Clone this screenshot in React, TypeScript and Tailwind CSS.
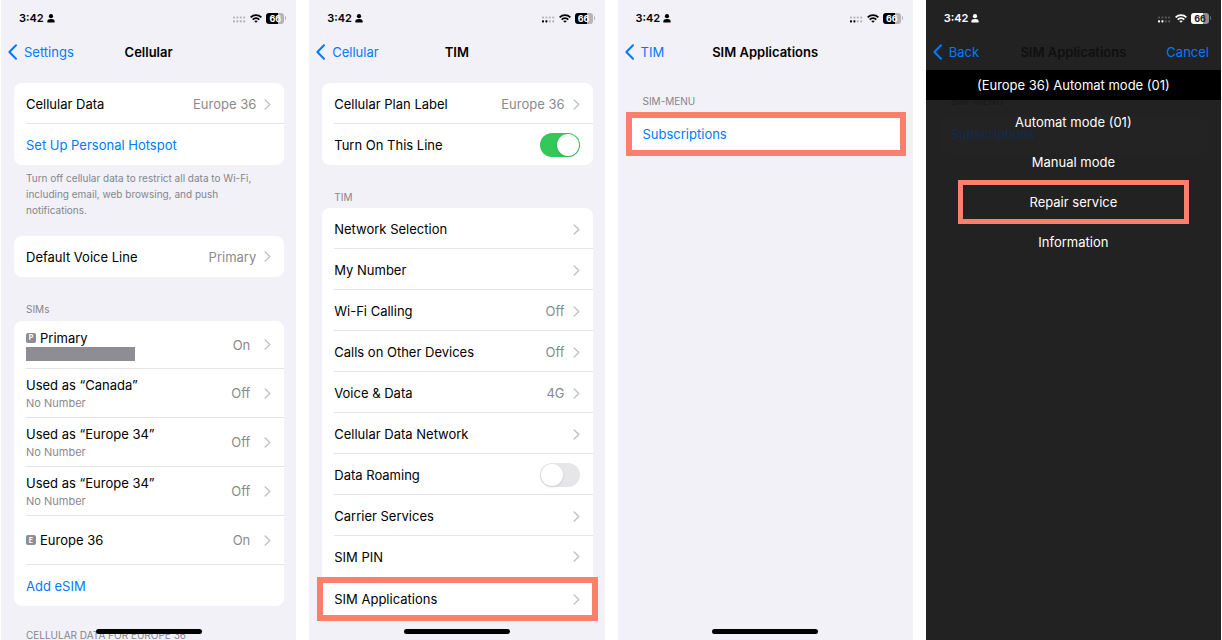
import type { ReactNode } from "react";
import clsx from "clsx";

type SimRow = {
  id: string;
  title: string;
  badge?: string;
  detail?: string;
  redacted?: boolean;
  value: string;
};

const SIMS: SimRow[] = [
  { id: "primary", title: "Primary", badge: "P", redacted: true, value: "On" },
  { id: "canada", title: "Used as “Canada”", detail: "No Number", value: "Off" },
  { id: "europe-34-a", title: "Used as “Europe 34”", detail: "No Number", value: "Off" },
  { id: "europe-34-b", title: "Used as “Europe 34”", detail: "No Number", value: "Off" },
  { id: "europe-36", title: "Europe 36", badge: "E", value: "On" },
];

const STK_ITEMS = ["Automat mode (01)", "Manual mode", "Repair service", "Information"];

function StatusBar({ bars = 2, dark = false }: { bars?: number; dark?: boolean }) {
  return (
    <div
      className={clsx(
        "flex h-9 items-center justify-between pr-2.5 pl-[18px]",
        dark ? "text-white" : "text-black"
      )}
    >
      <div className="flex items-center gap-[3px]">
        <span className="text-[11px] leading-4 font-semibold">3:42</span>
        <svg width="8" height="9" viewBox="0 0 8 9" fill="currentColor" aria-hidden="true">
          <circle cx="4" cy="2.2" r="2.1" />
          <path d="M0.4 8.6V7.2C0.4 5.7 1.6 5 4 5s3.6.7 3.6 2.2v1.4z" />
        </svg>
      </div>
      <div className="flex items-center gap-1">
        <svg width="13" height="7" viewBox="0 0 13 7" fill="currentColor" className="mt-[3px]" aria-hidden="true">
          {[0, 1, 2, 3].map((i) => (
            <g key={i}>
              <rect x={i * 3.4} y="0.4" width="2" height="2" rx="0.6" opacity="0.25" />
              <rect x={i * 3.4} y="4.2" width="2" height="2.2" rx="0.6" opacity={i < bars ? 1 : 0.25} />
            </g>
          ))}
        </svg>
        <svg width="12" height="9" viewBox="0 0 12 9" fill="none" stroke="currentColor" strokeWidth="1.8" aria-hidden="true">
          <path d="M0.6 3.3C3.7 0.3 8.3 0.3 11.4 3.3" />
          <path d="M2.7 5.6c1.9-1.8 4.7-1.8 6.6 0" />
          <path d="M6 8.8 4.2 7.1c1-.9 2.6-.9 3.6 0z" fill="currentColor" stroke="none" />
        </svg>
        <div className="flex items-center gap-px">
          <span
            className={clsx(
              "flex h-[11px] w-[18px] items-center justify-center rounded-[3px] text-[9px] leading-none font-bold",
              dark
                ? "bg-linear-to-r from-white from-66% to-[#8e8e8e] to-66% text-[#222222]"
                : "bg-linear-to-r from-black from-66% to-[#b5b4ba] to-66% text-white"
            )}
          >
            66
          </span>
          <span className={clsx("h-1 w-px rounded-r-sm", dark ? "bg-[#6e6e6e]" : "bg-[#b5b4ba]")} />
        </div>
      </div>
    </div>
  );
}

type NavBarProps = {
  back: string;
  title: string;
  action?: string;
  dark?: boolean;
};

function NavBar({ back, title, action, dark = false }: NavBarProps) {
  return (
    <header className="grid h-8 grid-cols-[1fr_auto_1fr] items-center px-[7px] text-[13px] leading-[18px]">
      <button type="button" className="flex items-center gap-[7px] justify-self-start text-[#007aff]">
        <svg width="9" height="16" viewBox="0 0 9 16" fill="none" stroke="currentColor" strokeWidth="2" strokeLinecap="round" strokeLinejoin="round" aria-hidden="true">
          <path d="M8 1.2 1.4 8 8 14.8" />
        </svg>
        {back}
      </button>
      <h2 className={clsx("font-semibold", dark ? "text-[#101010]" : "text-black")}>{title}</h2>
      {action && (
        <button type="button" className="justify-self-end pr-[5px] text-[#007aff]">
          {action}
        </button>
      )}
    </header>
  );
}

function Chevron() {
  return (
    <svg width="7" height="11" viewBox="0 0 7 11" fill="none" stroke="#c4c4c7" strokeWidth="1.5" strokeLinecap="round" strokeLinejoin="round" className="shrink-0" aria-hidden="true">
      <path d="M1.2 1 5.8 5.5 1.2 10" />
    </svg>
  );
}

function Phone({ label, children }: { label: string; children: ReactNode }) {
  return (
    <section aria-label={label} className="relative h-screen overflow-hidden bg-[#f2f1f7]">
      {children}
      <div className="absolute bottom-1.5 left-1/2 h-[5px] w-[106px] -translate-x-1/2 rounded-full bg-black" />
    </section>
  );
}

function Card({ children }: { children: ReactNode }) {
  return <div className="rounded-lg bg-white pl-3">{children}</div>;
}

function GroupLabel({ children }: { children: ReactNode }) {
  return <h3 className="pl-3 text-[10px] leading-4 text-[#85858b]">{children}</h3>;
}

// Coral frame that marks the row to tap
function Marker() {
  return <span className="pointer-events-none absolute inset-y-0 -right-[5px] -left-[17px] border-6 border-[#fa7f6c]" />;
}

type RowProps = {
  label: string;
  value?: string;
  link?: boolean;
  last?: boolean;
  marked?: boolean;
};

function Row({ label, value, link = false, last = false, marked = false }: RowProps) {
  return (
    <button
      type="button"
      className={clsx(
        "flex w-full items-center justify-between pr-[13px] text-left text-[13px] leading-[18px]",
        marked ? "relative h-11" : "h-[41px]",
        !last && "border-b border-[#e4e4e6] pt-0.5",
        link ? "text-[#007aff]" : "text-black"
      )}
    >
      {label}
      {!link && (
        <span className="flex items-center gap-2 text-[#8a8a8e]">
          {value}
          <Chevron />
        </span>
      )}
      {marked && <Marker />}
    </button>
  );
}

function SwitchRow({ label, on = false, last = false }: { label: string; on?: boolean; last?: boolean }) {
  return (
    <label
      className={clsx(
        "flex h-[41px] items-center justify-between pr-[13px] text-[13px] leading-[18px] text-black",
        !last && "border-b border-[#e4e4e6] pt-0.5"
      )}
    >
      {label}
      <input
        type="checkbox"
        role="switch"
        defaultChecked={on}
        className="flex h-6 w-10 appearance-none items-center rounded-full bg-[#e6e6e8] px-px before:size-[22px] before:rounded-full before:bg-white before:shadow-sm checked:justify-end checked:bg-[#34c759]"
      />
    </label>
  );
}

function SimButton({ sim }: { sim: SimRow }) {
  return (
    <button
      type="button"
      className={clsx(
        "flex w-full items-center justify-between border-b border-[#e4e4e6] pr-[13px] text-left",
        sim.redacted ? "h-12" : "h-[49px]"
      )}
    >
      <span className={clsx("flex flex-col", sim.detail && "pt-0.5")}>
        <span className="flex items-center gap-1 text-[13px] leading-[18px] text-black">
          {sim.badge && (
            <span className="flex size-2.5 items-center justify-center rounded-xs bg-[#8e8d93] text-[7px] leading-none font-bold text-white">
              {sim.badge}
            </span>
          )}
          {sim.title}
        </span>
        {sim.detail && <span className="text-[11px] leading-[18px] text-[#8a8a8e]">{sim.detail}</span>}
        {sim.redacted && <span className="h-3.5 w-[109px] bg-[#8e8d93]" />}
      </span>
      <span className="flex items-center gap-3.5 text-[13px] leading-[18px] text-[#8a8a8e]">
        {sim.value}
        <Chevron />
      </span>
    </button>
  );
}

function CellularScreen() {
  return (
    <Phone label="Cellular">
      <StatusBar bars={0} />
      <NavBar back="Settings" title="Cellular" />
      <div className="pt-[15px] pr-3 pl-[13px]">
        <Card>
          <Row label="Cellular Data" value="Europe 36" />
          <Row label="Set Up Personal Hotspot" link last />
        </Card>
        <p className="px-3 pt-[5px] text-[10px] leading-4 text-[#85858b]">
          Turn off cellular data to restrict all data to Wi-Fi, including email, web browsing, and push notifications.
        </p>
        <div className="pt-[18px] pb-6">
          <Card>
            <Row label="Default Voice Line" value="Primary" last />
          </Card>
        </div>
        <GroupLabel>SIMs</GroupLabel>
        <div className="pt-1 pb-[21px]">
          <Card>
            {SIMS.map((sim) => (
              <SimButton key={sim.id} sim={sim} />
            ))}
            <Row label="Add eSIM" link last />
          </Card>
        </div>
        <GroupLabel>CELLULAR DATA FOR EUROPE 36</GroupLabel>
      </div>
    </Phone>
  );
}

function LineScreen() {
  return (
    <Phone label="TIM">
      <StatusBar />
      <NavBar back="Cellular" title="TIM" />
      <div className="pt-[15px] pr-3 pl-[13px]">
        <Card>
          <Row label="Cellular Plan Label" value="Europe 36" />
          <SwitchRow label="Turn On This Line" on last />
        </Card>
        <div className="pt-6 pb-[3px]">
          <GroupLabel>TIM</GroupLabel>
        </div>
        <Card>
          <Row label="Network Selection" />
          <Row label="My Number" />
          <Row label="Wi-Fi Calling" value="Off" />
          <Row label="Calls on Other Devices" value="Off" />
          <Row label="Voice & Data" value="4G" />
          <Row label="Cellular Data Network" />
          <SwitchRow label="Data Roaming" />
          <Row label="Carrier Services" />
          <Row label="SIM PIN" last />
          <Row label="SIM Applications" last marked />
        </Card>
      </div>
    </Phone>
  );
}

function SimApplicationsScreen() {
  return (
    <Phone label="SIM Applications">
      <StatusBar />
      <NavBar back="TIM" title="SIM Applications" />
      <div className="pt-[25px] pr-3 pl-[13px]">
        <GroupLabel>SIM-MENU</GroupLabel>
        <div className="pt-[3px]">
          <Card>
            <Row label="Subscriptions" link last marked />
          </Card>
        </div>
      </div>
    </Phone>
  );
}

function ToolkitMenuScreen() {
  return (
    <section aria-label="SIM toolkit menu" className="relative h-screen overflow-hidden bg-[#222222]">
      <StatusBar dark />
      <NavBar back="Back" title="SIM Applications" action="Cancel" dark />
      {/* dimmed list that shows through the menu */}
      <div aria-hidden="true" className="absolute inset-x-[13px] top-[93px]">
        <p className="pl-3 text-[10px] leading-4 text-[#181818]">SIM-MENU</p>
        <p className="mt-1.5 rounded-lg bg-[#232323] pl-3 text-[13px] leading-[39px] text-[#0f2c50]">Subscriptions</p>
      </div>
      <div className="relative pt-0.5">
        <h3 className="bg-black text-center text-[13px] leading-[30px] text-white">(Europe 36) Automat mode (01)</h3>
        <ul className="px-8 pt-0.5">
          {STK_ITEMS.map((item) => (
            <li key={item} className="relative h-10">
              <button type="button" className="h-full w-full text-center text-[13px] leading-[18px] text-white">
                {item}
              </button>
              {item === "Repair service" && (
                <span className="pointer-events-none absolute inset-x-0 -inset-y-0.5 border-5 border-[#fa7f6c]" />
              )}
            </li>
          ))}
        </ul>
      </div>
    </section>
  );
}

export default function App() {
  return (
    <main className="grid grid-cols-4 gap-[13px] bg-white px-px font-[Inter,sans-serif]">
      <CellularScreen />
      <LineScreen />
      <SimApplicationsScreen />
      <ToolkitMenuScreen />
    </main>
  );
}
